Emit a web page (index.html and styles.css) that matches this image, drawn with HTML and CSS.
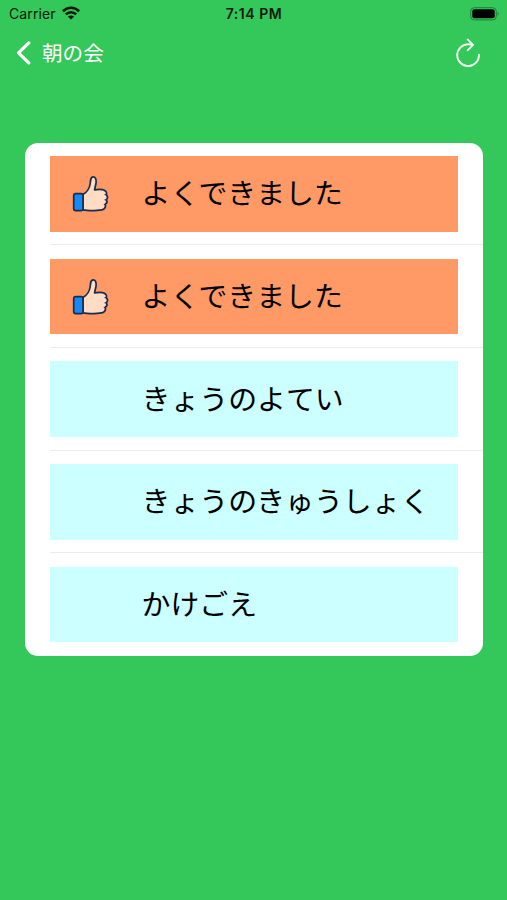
FILE: index.html
```html
<!DOCTYPE html>
<html lang="ja">
<head>
<meta charset="utf-8">
<title>朝の会</title>
<link rel="stylesheet" href="styles.css">
</head>
<body>
<header class="status">
  <div class="carrier"><span>Carrier</span>
    <svg class="wifi" width="18" height="14" viewBox="0 0 18 14"><g fill="none" stroke="#06190b" stroke-width="2.6"><path d="M.9 5.2C5.6.6 12.4.6 17.1 5.2"/><path d="M3.8 8.4c3-2.9 7.4-2.9 10.4 0"/></g><path d="M9 13.6 5.8 10.5c1.8-1.5 4.6-1.5 6.4 0z" fill="#06190b"/></svg>
  </div>
  <div class="time">7:14 PM</div>
  <svg class="battery" width="30" height="14" viewBox="0 0 30 14"><rect x=".7" y=".7" width="25.6" height="12.2" rx="3.6" fill="none" stroke="#1e7e38" stroke-width="1"/><rect x="2.3" y="2.3" width="22.4" height="9" rx="2" fill="#000"/><path d="M27.6 4.7q2 2.1 0 4.2z" fill="#1e7e38"/></svg>
</header>
<nav class="nav">
  <a class="back"><svg width="15" height="25" viewBox="0 0 15 25"><path d="M12.8 1.9 2.5 11.9l10.3 10" fill="none" stroke="#fff" stroke-width="3.2" stroke-linecap="round" stroke-linejoin="round"/></svg><span>朝の会</span></a>
  <svg class="reload" width="26" height="32" viewBox="0 0 26 32"><g fill="none" stroke="#f2fff0" stroke-width="1.9" stroke-linecap="round" stroke-linejoin="round"><path d="M24 17.8A10.9 10.9 0 1 1 13.1 7.3q2.3-.1 4.5.6"/><path d="m12.6 2.4 5.4 5.4-5.4 5.5"/></g></svg>
</nav>
<main class="card">
  <section class="row"><div class="tile done"><svg class="thumb" width="38" height="38" viewBox="0 0 38 38"><use href="#thumb"/></svg><span>よくできました</span></div></section>
  <section class="row"><div class="tile done"><svg class="thumb" width="38" height="38" viewBox="0 0 38 38"><use href="#thumb"/></svg><span>よくできました</span></div></section>
  <section class="row"><div class="tile"><span>きょうのよてい</span></div></section>
  <section class="row"><div class="tile"><span>きょうのきゅうしょく</span></div></section>
  <section class="row"><div class="tile"><span>かけごえ</span></div></section>
</main>
<svg class="defs" width="0" height="0"><defs><g id="thumb" stroke="#172d50" stroke-width="1.7" stroke-linejoin="round" stroke-linecap="round"><path d="M11 19.5c4.1-2.4 6.6-6.2 7.2-11 .3-3.9.5-6.5 2.8-6.7 2.6-.1 3.4 3.1 3.1 5.9-.3 2.7-1.2 4.5-1.5 7.1 3.6-.5 7.6-.6 9.4.3 2.7 1.2 3 3.1 2.2 4.6 1.6 1.5 1.4 3.7.1 5.1 1 1.6.6 3.5-.9 4.5.4 2.9-.9 5-3.7 5.6-3.5.8-8.2.8-11.7.8-2.6 0-4.4-.3-7-.8z" fill="#ffdcc3"/><path d="M3.8 18.6h5.7q1.5 0 1.5 1.5V34q0 1.6-1.5 1.6H3.8q-2.1 0-2.1-2.1V20.7q0-2.1 2.1-2.1z" fill="#1688f8"/><path d="M32.9 19.7h1.2M32.9 24.8h1.2M32.2 29.4h1.1" fill="none" stroke-width="1"/></g></defs></svg>
</body>
</html>
```

FILE: styles.css
```css
* { box-sizing: border-box; }
body {
  margin: 0;
  height: 900px;
  overflow: hidden;
  background: #34c759;
  font-family: Inter, "Noto Sans CJK JP", sans-serif;
}
svg { display: block; flex: none; }
.status {
  height: 28px;
  display: grid;
  grid-template-columns: 1fr auto 1fr;
  align-items: center;
  padding: 0 7px 0 9px;
  color: #06190b;
  font-size: 14px;
  line-height: 28px;
}
.carrier { display: flex; align-items: center; gap: 6px; letter-spacing: .1px; }
.wifi { margin-top: -2px; }
.time { font-weight: 600; letter-spacing: .55px; margin-right: 1px; }
.battery { justify-self: end; margin-top: -1px; }
.nav {
  height: 50px;
  display: flex;
  justify-content: space-between;
  align-items: center;
  padding: 0 26px 0 16px;
  color: #fff;
}
.back { display: flex; align-items: center; gap: 11px; font-size: 20.6px; line-height: 30px; }
.back span { padding-top: 2px; }
.card {
  width: 457.5px;
  height: 513.5px;
  margin: 64.5px 0 0 25px;
  padding-left: 25px;
  background: #fff;
  border-radius: 13px;
}
.row {
  height: 102.7px;
  padding: 13.5px 24.5px 0 0;
  border-bottom: 1px solid #ececee;
}
.row:last-child { border-bottom: 0; }
.tile {
  height: 75.7px;
  display: flex;
  align-items: center;
  padding-left: 91.5px;
  background: #cff;
  color: #000;
  font-size: 28.9px;
  line-height: 40px;
  white-space: nowrap;
}
.tile span { padding-top: 1px; }
.done { padding-left: 22px; background: #ff9966; }
.thumb { margin-right: 31.5px; }
.defs { position: absolute; }
```
